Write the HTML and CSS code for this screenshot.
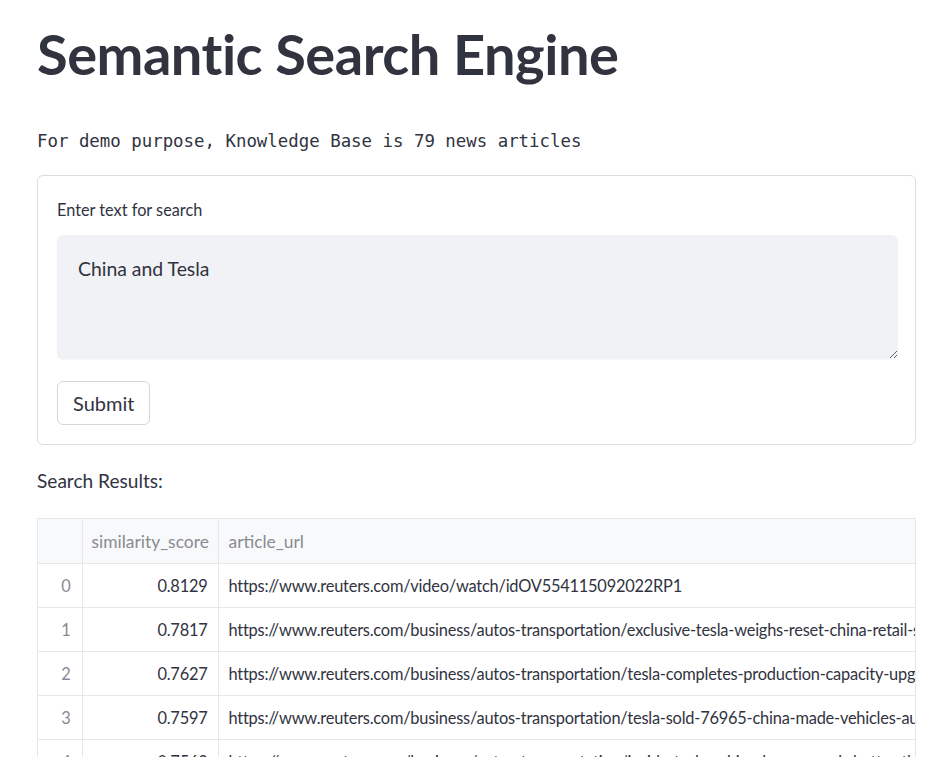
FILE: index.html
```html
<!DOCTYPE html>
<html lang="en">
<head>
<meta charset="utf-8">
<title>Semantic Search Engine</title>
<link rel="stylesheet" href="styles.css">
</head>
<body>
<main class="main">
  <h1 class="title">Semantic Search Engine</h1>
  <p class="mono">For demo purpose, Knowledge Base is 79 news articles</p>
  <form class="form">
    <label class="label" for="q">Enter text for search</label>
    <textarea id="q" class="textarea">China and Tesla</textarea>
    <button type="button" class="btn">Submit</button>
  </form>
  <p class="results-title">Search Results:</p>
  <div class="frame">
    <table class="grid">
      <colgroup>
        <col class="c-idx">
        <col class="c-score">
        <col class="c-url">
      </colgroup>
      <thead>
        <tr><th class="idx"></th><th class="score">similarity_score</th><th class="url">article_url</th></tr>
      </thead>
      <tbody>
        <tr><td class="idx">0</td><td class="score">0.8129</td><td class="url">https://www.reuters.com/video/watch/idOV554115092022RP1</td></tr>
        <tr><td class="idx">1</td><td class="score">0.7817</td><td class="url">https://www.reuters.com/business/autos-transportation/exclusive-tesla-weighs-reset-china-retail-strategy</td></tr>
        <tr><td class="idx">2</td><td class="score">0.7627</td><td class="url">https://www.reuters.com/business/autos-transportation/tesla-completes-production-capacity-upgrade</td></tr>
        <tr><td class="idx">3</td><td class="score">0.7597</td><td class="url">https://www.reuters.com/business/autos-transportation/tesla-sold-76965-china-made-vehicles-august</td></tr>
        <tr><td class="idx">4</td><td class="score">0.7563</td><td class="url">https://www.reuters.com/business/autos-transportation/inside-teslas-china-boom-much-better-than-expected</td></tr>
      </tbody>
    </table>
  </div>
</main>
</body>
</html>
```

FILE: styles.css
```css
html, body {
  margin: 0;
  padding: 0;
  background: #ffffff;
}
body {
  font-family: "Lato", "Noto Sans", sans-serif;
  color: #31333f;
  overflow: hidden;
}
.main {
  padding: 0 20px 0 37px;
  display: flex;
  flex-direction: column;
}
.title {
  margin: 0;
  padding-top: 22px;
  font-size: 56px;
  line-height: 64px;
  font-weight: 700;
  letter-spacing: -0.5px;
}
.mono {
  margin: 43px 0 0;
  font-family: "DejaVu Sans Mono", "Liberation Mono", monospace;
  font-size: 17.4px;
  line-height: 24px;
}
.form {
  margin-top: 22px;
  border: 1px solid #dcdde0;
  border-radius: 6px;
  padding: 23px 17px 19px 19px;
  display: flex;
  flex-direction: column;
  align-items: flex-start;
}
.label {
  font-size: 16.3px;
  line-height: 22px;
}
.textarea {
  margin-top: 14px;
  box-sizing: border-box;
  width: 100%;
  height: 125px;
  background: #f0f2f6;
  border: none;
  border-bottom: 1px solid #f7f8fa;
  border-radius: 6px;
  padding: 21px 21px;
  font-family: inherit;
  font-size: 19.4px;
  line-height: 26px;
  color: #31333f;
  outline: none;
}
.btn {
  margin-top: 21px;
  height: 44px;
  padding: 0 15px;
  background: #ffffff;
  border: 1px solid #d6d6d9;
  border-radius: 6px;
  font-family: inherit;
  font-size: 20px;
  color: #31333f;
}
.results-title {
  margin: 23px 0 0;
  font-size: 19.1px;
  line-height: 26px;
}
.frame {
  margin-top: 24px;
  border: 1px solid #e6e7ea;
  overflow: hidden;
  height: 300px;
}
.grid {
  width: 1300px;
  table-layout: fixed;
  border-collapse: collapse;
  font-size: 16.4px;
  letter-spacing: -0.22px;
  white-space: nowrap;
}
.c-idx { width: 44px; }
.c-score { width: 136px; }
.c-url { width: 1120px; }
.grid th, .grid td {
  height: 43px;
  border-bottom: 1px solid #e6e7ea;
  border-right: 1px solid #e6e7ea;
  padding: 0 9px;
  font-weight: 400;
  overflow: hidden;
}
.grid thead th {
  height: 44px;
  background: #f8f9fb;
  color: #8a8b92;
  text-align: left;
  font-size: 17.4px;
  letter-spacing: 0;
}
.grid .idx {
  padding: 0 11px 0 0;
  text-align: right;
  color: #8a8b92;
}
.grid td.idx {
  background: #ffffff;
}
.grid td.score {
  padding: 0 10px 0 8px;
  text-align: right;
}
.grid .url {
  padding-left: 10px;
}
.grid td.url {
  color: #31333f;
}
```
